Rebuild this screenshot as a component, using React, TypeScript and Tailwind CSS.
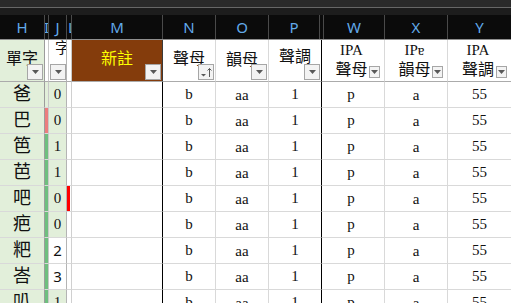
import React from "react";

const SERIF = "font-['Liberation_Serif','Noto_Sans_CJK_TC',serif]";
const SANS = "font-['Noto_Sans','Liberation_Sans',sans-serif]";

function Tri() {
  return (
    <svg width="7" height="4" viewBox="0 0 7 4">
      <polygon points="0,0 7,0 3.5,4" fill="#595959" />
    </svg>
  );
}

function SortIcon() {
  return (
    <svg width="12" height="12" viewBox="0 0 12 12">
      <polygon points="1,8 6,8 3.5,10.5" fill="#595959" />
      <line x1="9.5" y1="2.5" x2="9.5" y2="11" stroke="#595959" strokeWidth="1" />
      <polyline points="7.5,4.5 9.5,2.5 11.5,4.5" fill="none" stroke="#595959" strokeWidth="1" />
    </svg>
  );
}

function FBtn({ cls, sort }: { cls: string; sort?: boolean }) {
  return (
    <div className={`absolute flex items-center justify-center bg-[#f3f3f3] border border-[#a6a6a6] ${cls}`}>
      {sort ? <SortIcon /> : <Tri />}
    </div>
  );
}

const BIG = "absolute right-px bottom-px w-[16px] h-[16px]";
const SMALL = "absolute right-[4px] bottom-[3px] w-[11px] h-[12px]";

const letters: { t: string; cls: string }[] = [
  { t: "H", cls: "justify-center" },
  { t: "I", cls: "justify-center" },
  { t: "J", cls: "justify-center" },
  { t: "L", cls: "justify-start pl-px" },
  { t: "M", cls: "justify-center" },
  { t: "N", cls: "justify-center" },
  { t: "O", cls: "justify-center" },
  { t: "P", cls: "justify-center" },
  { t: "", cls: "justify-center" },
  { t: "W", cls: "justify-center" },
  { t: "X", cls: "justify-center" },
  { t: "Y", cls: "justify-center" },
];

type Row = { h: string; i: string; j: string; jbg: string; jfont: string; red?: boolean };

const G = "bg-[#6fbf7f]";
const LG = "bg-[#e2efda]";

const rows: Row[] = [
  { h: "爸", i: LG, j: "0", jbg: LG, jfont: SERIF },
  { h: "巴", i: "bg-[#ec7d7e]", j: "0", jbg: LG, jfont: SERIF },
  { h: "笆", i: G, j: "1", jbg: LG, jfont: SERIF },
  { h: "芭", i: G, j: "1", jbg: LG, jfont: SERIF },
  { h: "吧", i: G, j: "0", jbg: LG, jfont: SERIF, red: true },
  { h: "疤", i: G, j: "0", jbg: LG, jfont: SERIF },
  { h: "粑", i: G, j: "2", jbg: "bg-white", jfont: SANS },
  { h: "峇", i: G, j: "3", jbg: "bg-white", jfont: SANS },
  { h: "叭", i: G, j: "1", jbg: LG, jfont: SERIF },
];

const COLS = "grid grid-cols-[45px_4px_18px_5px_91px_53px_53px_53px_63px_63px_63px]";
const CELL = "border-r border-b border-b-[#d9d9d9] flex items-center justify-center overflow-hidden";
const GR = "border-r-[#d9d9d9]";

export default function App() {
  return (
    <div className="w-[511px] h-[303px] overflow-hidden bg-white text-[#111]">
      <div className="h-[7px] bg-[#2a2a2a]" />
      <div className="h-px bg-[#676767]" />
      <div className="h-[7px] bg-[#1d1d1d]" />
      <div className={`grid grid-cols-[45px_4px_18px_5px_91px_53px_53px_51px_4px_61px_63px_63px] h-[25px] bg-[#0b0b0b] border-b border-b-[#8f8f8f] ${SANS}`}>
        {letters.map((l, idx) => (
          <div
            key={idx}
            className={`flex items-center overflow-hidden text-[15px] text-[#62aaea] ${l.cls} ${idx < letters.length - 1 ? "border-r border-r-[#4a4a4a]" : ""}`}
          >
            {l.t}
          </div>
        ))}
      </div>

      {/* filter header row */}
      <div className={`${COLS} h-[42px] ${SERIF}`}>
        <div className="relative bg-[#e2efda] border-r border-b border-r-[#9c9c9c] border-b-[#ababab] flex items-center justify-center pb-[4px] text-[16px]">
          單字
          <FBtn cls={BIG} />
        </div>
        <div className="bg-white border-r border-b border-r-[#c8c8c8] border-b-[#ababab]" />
        <div className="relative bg-white border-r border-b border-r-[#b4b4b4] border-b-[#ababab] overflow-hidden">
          <div className="absolute left-[6px] top-[0px] text-[15px] leading-[17px] whitespace-nowrap">字</div>
          <FBtn cls="absolute right-0 bottom-px w-[16px] h-[16px]" />
        </div>
        <div className="bg-white border-r border-b border-r-[#c8c8c8] border-b-[#ababab]" />
        <div className="relative bg-[#843c0c] border-r border-b border-r-[#3a3a3a] border-b-[#ababab] flex items-center justify-center pb-[4px] text-[16px] text-[#ffff00]">
          新註
          <FBtn cls={BIG} />
        </div>
        <div className="relative bg-white border-r border-b border-r-[#d9d9d9] border-b-[#ababab] flex items-center justify-center pb-[4px] text-[16px]">
          聲母
          <FBtn cls={BIG} sort />
        </div>
        <div className="relative bg-white border-r border-b border-r-[#d9d9d9] border-b-[#ababab] flex items-center justify-center pb-[2px] text-[16px]">
          韻母
          <FBtn cls={BIG} />
        </div>
        <div className="relative bg-white border-r border-b border-r-black border-b-[#ababab] flex items-center justify-center pb-[8px] text-[16px]">
          聲調
          <FBtn cls="absolute right-px bottom-px w-[16px] h-[16px]" />
        </div>
        {[
          ["IPA", "聲母"],
          ["IPɐ", "韻母"],
          ["IPA", "聲調"],
        ].map(([a, b], idx) => (
          <div
            key={idx}
            className={`relative bg-white border-b border-b-[#ababab] flex flex-col items-center pt-[2px] pr-[3px] ${idx < 2 ? "border-r border-r-[#d9d9d9]" : ""}`}
          >
            <div className="text-[15px] leading-[17px]">{a}</div>
            <div className="text-[16px] leading-[19px] mt-[1px]">{b}</div>
            <FBtn cls={SMALL} />
          </div>
        ))}
      </div>

      {/* data rows */}
      {rows.map((r, idx) => (
        <div key={idx} className={`${COLS} h-[26px] ${SERIF}`}>
          <div className={`${CELL} bg-[#e2efda] border-r-[#9c9c9c] text-[18px]`}>{r.h}</div>
          <div className={`border-r border-b border-r-[#c8c8c8] border-b-[#d9d9d9] ${r.i}`} />
          <div className={`${CELL} ${r.jbg} border-r-[#b4b4b4] text-[15px] ${r.jfont}`}>{r.j}</div>
          <div className={`border-r border-b border-r-[#d0d0d0] border-b-[#d9d9d9] bg-white flex`}>
            {r.red ? <div className="w-[3px] bg-[#ff0000]" /> : null}
          </div>
          <div className={`${CELL} bg-white border-r-black`} />
          <div className={`${CELL} ${GR} text-[15px]`}>b</div>
          <div className={`${CELL} ${GR} text-[15px] pt-[2px]`}>aa</div>
          <div className={`${CELL} border-r-black text-[15px]`}>1</div>
          <div className={`${CELL} ${GR} text-[15px] pr-[4px]`}>p</div>
          <div className={`${CELL} ${GR} text-[15px] pt-[2px]`}>a</div>
          <div className={`${CELL} border-r-0 text-[15px]`}>55</div>
        </div>
      ))}
    </div>
  );
}
